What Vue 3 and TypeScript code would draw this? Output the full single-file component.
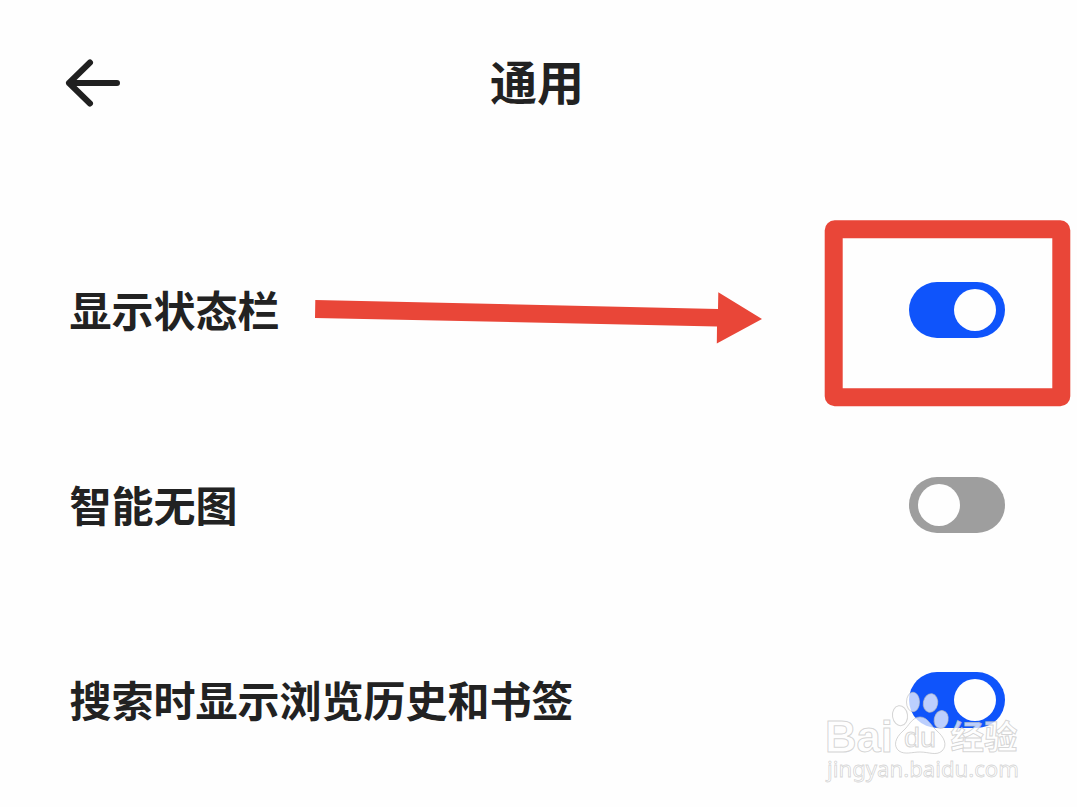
<script setup lang="ts">
import { ref } from 'vue'

interface Setting {
  label: string
  on: boolean
}

const settings = ref<Setting[]>([
  { label: '显示状态栏', on: true },
  { label: '智能无图', on: false },
  { label: '搜索时显示浏览历史和书签', on: true },
])

function toggle(item: Setting): void {
  item.on = !item.on
}
</script>

<template>
  <main class="page">
    <header class="header">
      <svg class="back" width="56" height="50" viewBox="0 0 56 50">
        <path d="M26 4.500 L5 25 L26 45.500 M5 25 H53" />
      </svg>
      <h1 class="title">通用</h1>
      <span class="spacer"></span>
    </header>

    <section class="list">
      <div v-for="item in settings" :key="item.label" class="row">
        <span class="label">{{ item.label }}</span>
        <span class="switch" :class="{ on: item.on }" role="switch" :aria-checked="item.on" @click="toggle(item)">
          <span class="knob"></span>
        </span>
      </div>
    </section>

    <svg class="overlay" width="1077" height="807" viewBox="0 0 1077 807">
      <polygon class="arrow" points="315.300,300 718,309 718.300,292.300 762,319 716.800,343.500 717,326.500 315,318" />
      <rect class="frame" x="833.700" y="229.300" width="227.600" height="168" rx="1" />
    </svg>

    <svg class="watermark" width="210" height="100" viewBox="820 685 210 100">
      <g class="mark">
        <text class="latin" x="825" y="752" font-size="44" textLength="68" lengthAdjust="spacingAndGlyphs">Bai</text>
        <ellipse cx="900" cy="715.700" rx="7.500" ry="10" transform="rotate(-8 900 715.700)" />
        <ellipse cx="913" cy="702" rx="6.500" ry="9.800" />
        <ellipse cx="930.500" cy="703" rx="7.200" ry="9.300" transform="rotate(10 930.500 703)" />
        <ellipse cx="941.200" cy="719.500" rx="7" ry="9" transform="rotate(12 941.200 719.500)" />
        <path d="M920 717 C912 717 909 726 903 731 C895 738 893 746 899 751 C905 755 912 752 920 752 C929 752 936 756 942 751 C948 745 944 737 937 731 C931 726 928 717 920 717 Z" />
        <text class="du" x="904" y="747" font-size="27" textLength="32" lengthAdjust="spacingAndGlyphs">du</text>
        <text class="cjk" x="950.500" y="749" font-size="33.500" textLength="67">经验</text>
        <text class="url" x="827" y="777" font-size="22" textLength="192" lengthAdjust="spacingAndGlyphs">jingyan.baidu.com</text>
      </g>
    </svg>
  </main>
</template>

<style>
html,
body {
  margin: 0;
  background: #fefefe;
}
</style>

<style scoped>
.page {
  position: relative;
  box-sizing: border-box;
  width: 1077px;
  height: 807px;
  overflow: hidden;
  background: #fefefe;
  color: #222;
  font-family: "Noto Sans CJK SC", sans-serif;
}

.header {
  display: grid;
  grid-template-columns: 56px 1fr 56px;
  align-items: center;
  height: 166px;
  padding: 0 67px 0 64px;
}

.back path {
  fill: none;
  stroke: #202020;
  stroke-width: 6;
  stroke-linecap: round;
  stroke-linejoin: round;
}

.back {
  display: block;
}

.title {
  margin: 0 0 6px;
  text-align: center;
  font-size: 47px;
  line-height: 70px;
  font-weight: 700;
}

.list {
  padding: 46px 72px 0 69.5px;
}

.row {
  display: flex;
  align-items: center;
  justify-content: space-between;
  height: 195px;
}

.label {
  margin-bottom: 1px;
  font-size: 42px;
  line-height: 62px;
  font-weight: 700;
}

.switch {
  display: flex;
  align-items: center;
  box-sizing: border-box;
  width: 96px;
  height: 56px;
  padding: 0 9px;
  border-radius: 28px;
  background: #9e9e9e;
}

.switch.on {
  justify-content: flex-end;
  background: #0f54fb;
}

.knob {
  width: 42px;
  height: 42px;
  border-radius: 50%;
  background: #fefefe;
}

.overlay {
  position: absolute;
  inset: 0;
  pointer-events: none;
}

.arrow {
  fill: #e94638;
}

.frame {
  fill: none;
  stroke: #e94638;
  stroke-width: 18;
  stroke-linejoin: round;
}

.watermark {
  position: absolute;
  left: 820px;
  top: 685px;
  pointer-events: none;
}

.mark {
  fill: rgba(255, 255, 255, 0.72);
  stroke: rgba(190, 190, 190, 0.65);
  stroke-width: 1;
  font-family: "Liberation Sans", "Noto Sans CJK SC", sans-serif;
}

.latin,
.cjk {
  font-weight: 700;
}

.cjk {
  font-family: "Noto Sans CJK SC", sans-serif;
}

.url {
  font-family: "Noto Sans", sans-serif;
  stroke-width: 0.8;
}
</style>
